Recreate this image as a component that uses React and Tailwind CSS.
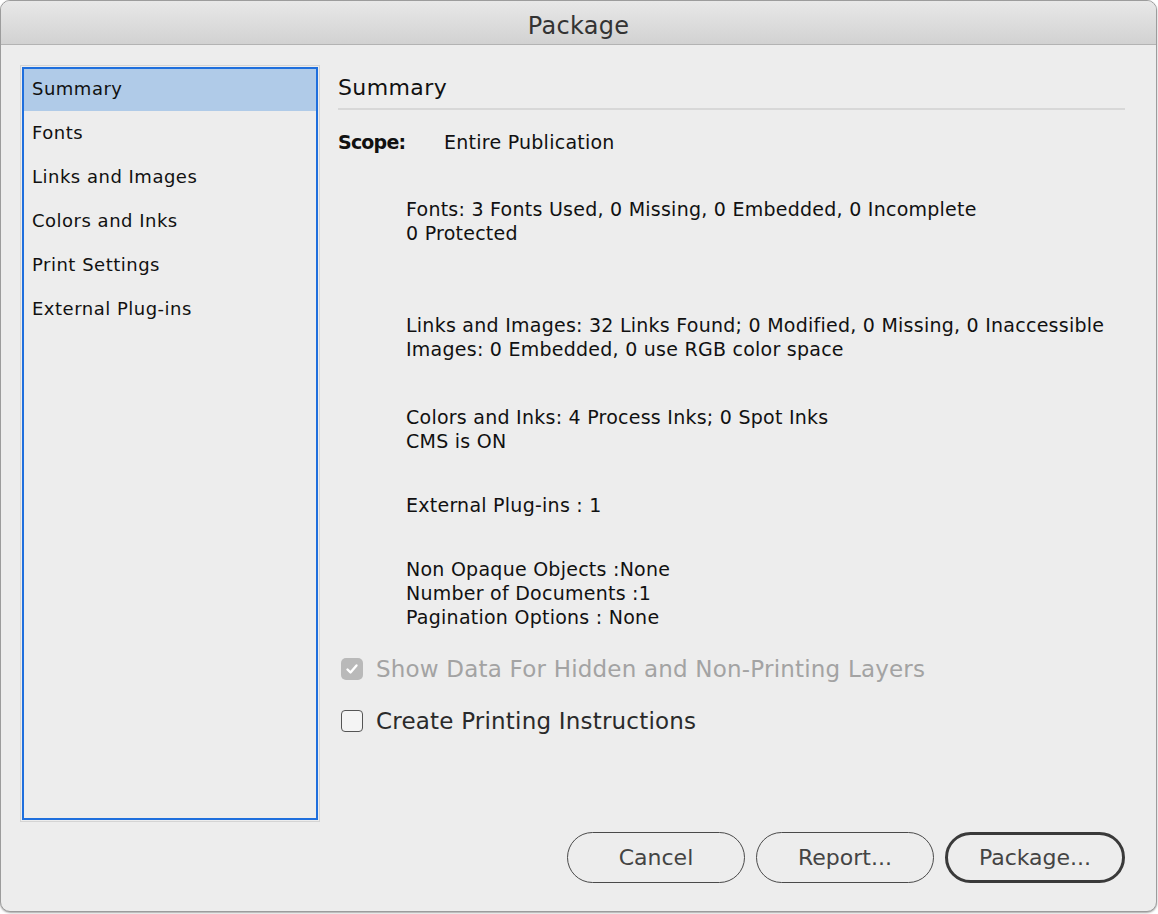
import React from "react";

const font = { fontFamily: '"DejaVu Sans", "Liberation Sans", sans-serif' };

export default function App() {
  const items = ["Summary", "Fonts", "Links and Images", "Colors and Inks", "Print Settings", "External Plug-ins"];
  return (
    <div className="w-[1158px] h-[914px] bg-white" style={font}>
      <div className="w-[1157px] h-[912px] border border-[#9c9c9c] rounded-[10px] overflow-hidden bg-[#ededed] flex flex-col shadow-[0_1px_2px_rgba(0,0,0,0.35)]">
        <div className="h-[44px] shrink-0 bg-gradient-to-b from-[#e8e8e8] to-[#d2d2d2] border-b border-[#b3b3b3] flex items-center justify-center">
          <span className="text-[24px] tracking-[0.3px] text-[#333] leading-none mt-[7px]">Package</span>
        </div>
        <div className="flex flex-col px-[19px] pt-[20px]">
          <div className="flex">
            <div className="w-[300px] h-[757px] shrink-0 border border-[#d4d4d4] p-px">
              <div className="w-full h-full border-2 border-[#1f6fdd] flex flex-col">
                {items.map((t, i) =>
                  i === 0 ? (
                    <div key={t} className="h-[42px] flex items-center pl-[8px] pb-[3px] text-[18px] tracking-[0.5px] text-[#111] bg-[#b0cbe8]">
                      {t}
                    </div>
                  ) : (
                    <div key={t} className="h-[44px] flex items-center pl-[8px] pb-[2px] text-[18px] tracking-[0.5px] text-[#111]">
                      {t}
                    </div>
                  )
                )}
              </div>
            </div>
            <div className="flex-1 ml-[18px] mr-[12px] pt-[10px] flex flex-col">
              <div className="h-[35px] text-[22px] tracking-[0.4px] leading-[26px] text-[#111] border-b-2 border-[#d8d8d8]">Summary</div>
              <div className="flex mt-[20px] text-[19px] tracking-[0.25px] leading-[24px] text-[#111]">
                <span className="font-bold tracking-[-0.8px] w-[106px]">Scope:</span>
                <span>Entire Publication</span>
              </div>
              <div className="pl-[68px] text-[19px] tracking-[0.25px] leading-[24px] text-[#111]">
                <div className="mt-[43px]">
                  <div>Fonts: 3 Fonts Used, 0 Missing, 0 Embedded, 0 Incomplete</div>
                  <div>0 Protected</div>
                </div>
                <div className="mt-[68px]">
                  <div>Links and Images: 32 Links Found; 0 Modified, 0 Missing, 0 Inaccessible</div>
                  <div>Images: 0 Embedded, 0 use RGB color space</div>
                </div>
                <div className="mt-[44px]">
                  <div>Colors and Inks: 4 Process Inks; 0 Spot Inks</div>
                  <div>CMS is ON</div>
                </div>
                <div className="mt-[40px]">
                  <div>External Plug-ins : 1</div>
                </div>
                <div className="mt-[40px]">
                  <div>Non Opaque Objects :None</div>
                  <div>Number of Documents :1</div>
                  <div>Pagination Options : None</div>
                </div>
              </div>
              <div className="mt-[26px] flex items-center h-[28px] pl-[3px]">
                <div className="w-[22px] h-[22px] rounded-[5px] bg-[#b9b9b9] flex items-center justify-center">
                  <svg width="16" height="16" viewBox="0 0 16 16">
                    <path d="M3.5 8.5 L6.5 11.5 L12.5 4.5" fill="none" stroke="#fff" strokeWidth="2.4" strokeLinecap="round" strokeLinejoin="round" />
                  </svg>
                </div>
                <span className="ml-[13px] text-[23px] tracking-[0.2px] leading-[28px] text-[#a3a3a3]">Show Data For Hidden and Non-Printing Layers</span>
              </div>
              <div className="mt-[24px] flex items-center h-[28px] pl-[3px]">
                <div className="w-[22px] h-[22px] rounded-[4px] border-[1.5px] border-[#555] bg-[#f4f4f4]" />
                <span className="ml-[13px] text-[23px] tracking-[0.2px] leading-[28px] text-[#2a2a2a]">Create Printing Instructions</span>
              </div>
            </div>
          </div>
          <div className="flex justify-end gap-[11px] mt-[10px] pr-[12px]">
            <button className="w-[178px] h-[51px] rounded-full border-[1.5px] border-[#4a4a4a] text-[22px] text-[#444]">Cancel</button>
            <button className="w-[178px] h-[51px] rounded-full border-[1.5px] border-[#4a4a4a] text-[22px] text-[#444]">Report...</button>
            <button className="w-[180px] h-[51px] rounded-full border-[3px] border-[#3a3a3a] text-[22px] text-[#444]">Package...</button>
          </div>
        </div>
      </div>
    </div>
  );
}
